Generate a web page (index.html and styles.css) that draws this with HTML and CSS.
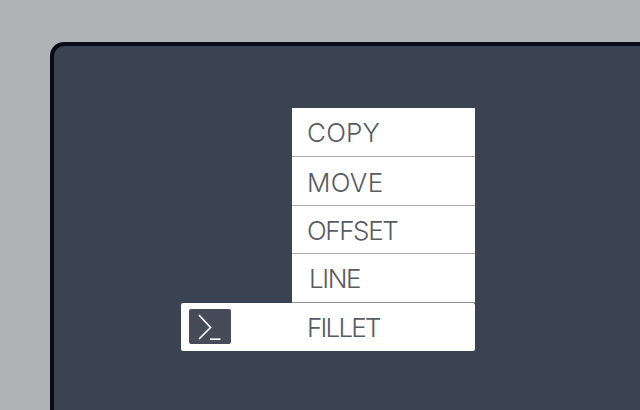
FILE: index.html
```html
<!DOCTYPE html>
<html lang="en">
<head>
<meta charset="utf-8">
<title>Command menu</title>
<link rel="stylesheet" href="styles.css">
</head>
<body>
<main class="window">
  <div class="menu">
    <ul class="list">
      <li class="item">COPY</li>
      <li class="item item-move">MOVE</li>
      <li class="item item-tight">OFFSET</li>
      <li class="item item-line">LINE</li>
    </ul>
    <div class="active">
      <span class="prompt">
        <svg width="42" height="35" viewBox="0 0 42 35" fill="none" stroke="#fff" aria-hidden="true">
          <path class="chevron" d="M10 6 L21.5 18.5 L10 30"/>
          <path class="cursor" d="M21 30.2 H31.5"/>
        </svg>
      </span>
      <span class="active-label">FILLET</span>
    </div>
  </div>
</main>
</body>
</html>
```

FILE: styles.css
```css
* { box-sizing: border-box; }
html, body { margin: 0; height: 100%; }
body {
  width: 640px;
  height: 410px;
  overflow: hidden;
  background: #b1b3b6;
  padding: 42px 0 0 50px;
  font-family: "Inter", "Liberation Sans", sans-serif;
}
.window {
  width: 590px;
  height: 368px;
  background: #3a4351;
  border: 4px solid #090c15;
  border-right: 0;
  border-bottom: 0;
  border-radius: 14px 0 0 0;
  padding: 62px 0 0 127px;
}
.menu { width: 294px; }
.list {
  list-style: none;
  margin: 0 0 0 111px;
  padding: 0;
  background: #fff;
}
.item {
  height: 49px;
  padding: 0 0 0 15px;
  display: flex;
  align-items: center;
  color: #575b62;
  font-size: 26px;
  font-weight: 350;
  letter-spacing: 0.2px;
  border-bottom: 1px solid #a9abad;
}
.item-move { padding-top: 2px; letter-spacing: 0.3px; }
.item-tight { height: 48px; padding-top: 2px; letter-spacing: -1.4px; }
.item-line { padding-left: 17px; border-bottom-color: #8f9192; letter-spacing: -1.4px; }
.active {
  height: 48px;
  background: #fff;
  border-radius: 2px;
  display: flex;
  align-items: center;
  padding: 0 0 1px 8px;
}
.prompt {
  width: 42px;
  height: 35px;
  background: #464b59;
  border-radius: 2px;
  display: flex;
}
.chevron { stroke-width: 1.7; }
.cursor { stroke-width: 1.7; }
.active-label {
  margin: 2px 0 0 76px;
  color: #575b62;
  font-size: 26px;
  font-weight: 350;
  letter-spacing: -1.8px;
}
```
